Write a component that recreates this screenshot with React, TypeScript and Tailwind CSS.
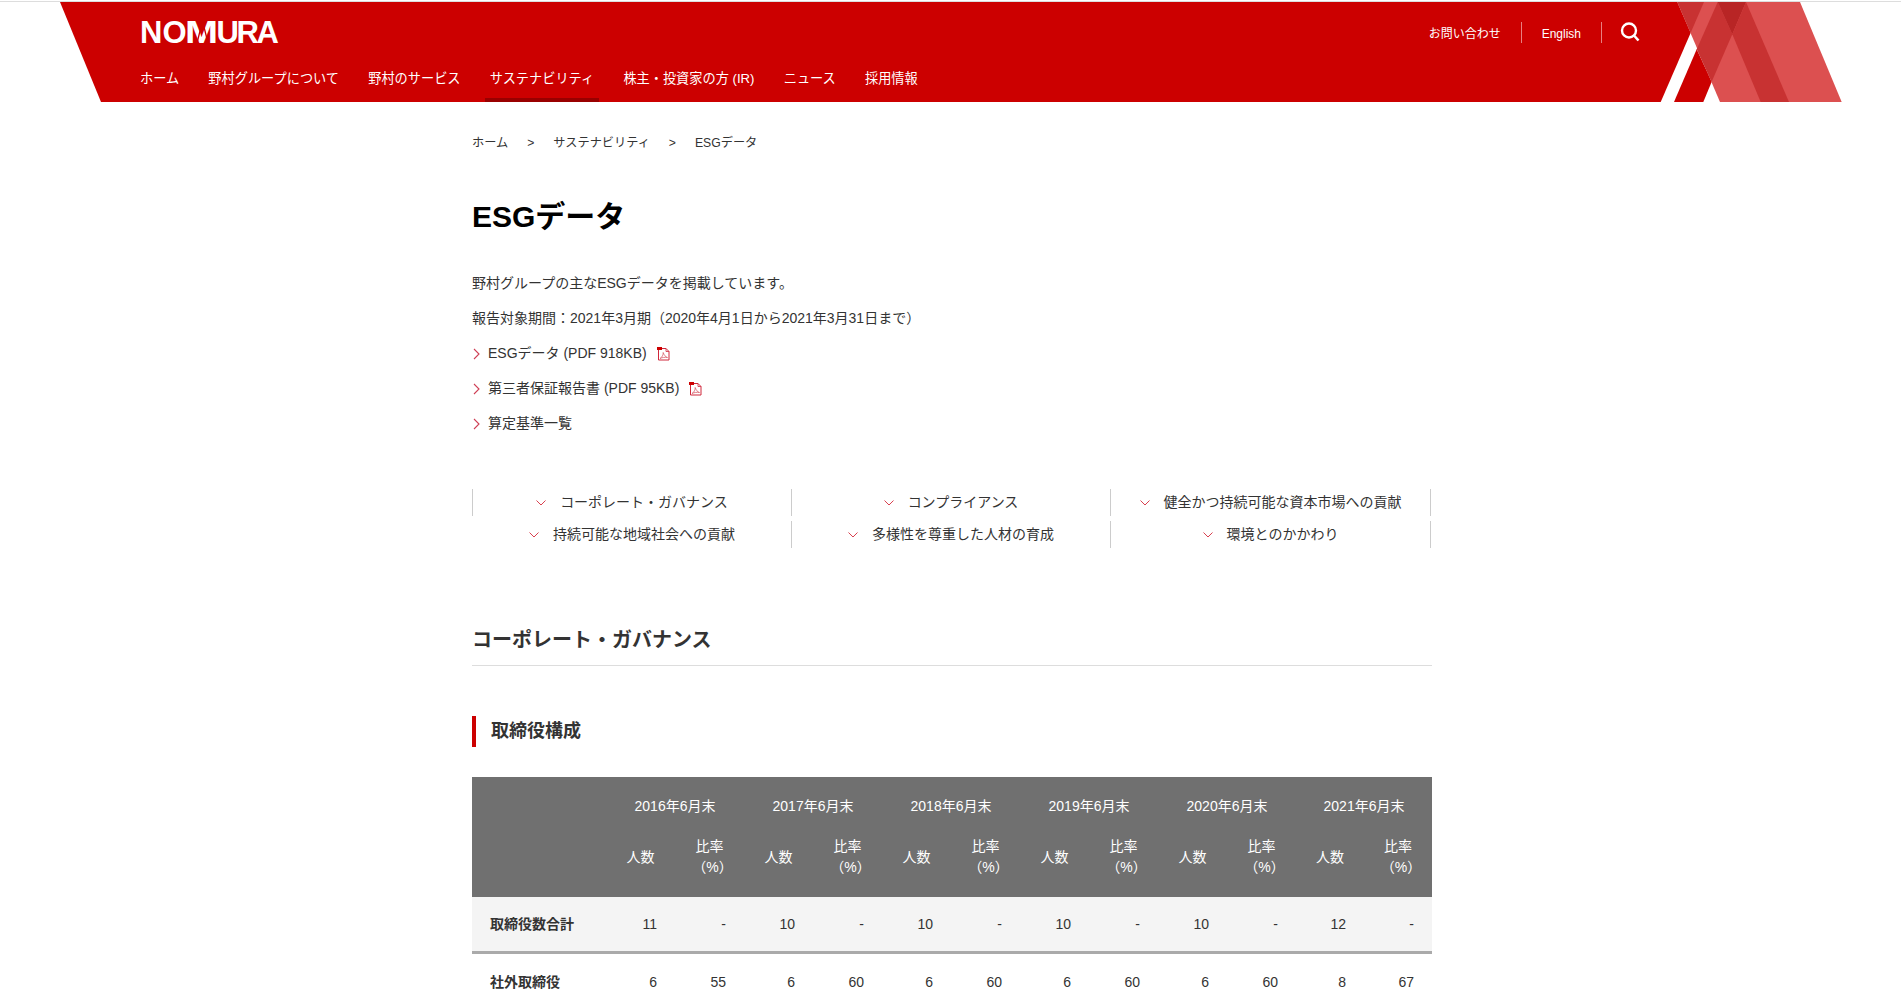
const navItems = ['ホーム', '野村グループについて', '野村のサービス', 'サステナビリティ', '株主・投資家の方 (IR)', 'ニュース', '採用情報'];

const anchors = [
  ['コーポレート・ガバナンス', 'コンプライアンス', '健全かつ持続可能な資本市場への貢献'],
  ['持続可能な地域社会への貢献', '多様性を尊重した人材の育成', '環境とのかかわり'],
];

const years = ['2016年6月末', '2017年6月末', '2018年6月末', '2019年6月末', '2020年6月末', '2021年6月末'];

const rows = [
  { label: '取締役数合計', values: ['11', '-', '10', '-', '10', '-', '10', '-', '10', '-', '12', '-'], total: true },
  { label: '社外取締役', values: ['6', '55', '6', '60', '6', '60', '6', '60', '6', '60', '8', '67'], total: false },
];

function HeaderShape() {
  return (
    <svg className="absolute inset-0 w-full h-full" viewBox="0 0 1901 100" preserveAspectRatio="none">
      <polygon fill="#cc0000" points="60,0 1677.3,0 1690.7,30.7 1660.7,100 101,100" />
      <polygon fill="#cc0000" points="1674,100 1696.7,47.3 1711.7,79.7 1703.3,100" />
      <polygon fill="#dc5050" points="1677.3,0 1800,0 1841.7,100 1720,100" />
      <polygon fill="#c83232" points="1677.3,0 1704,0 1690.7,30.7" />
      <polygon fill="#c83232" points="1696.7,47.3 1717.7,0 1732.3,32.3 1711.7,79.7" />
      <polygon fill="#b82525" points="1717.7,0 1746,0 1732.3,32.3" />
      <polygon fill="#c83232" points="1732.3,32.3 1746,0 1789,100 1760.7,100" />
    </svg>
  );
}

function Logo() {
  return (
    <div className="flex text-[31px] font-bold leading-none">
      <span>NO</span>
      {/* the M of the mark is wider than the font's, with slits cut in it */}
      <span className="relative inline-block w-[32px] -ml-[2px]">
        <span className="inline-block origin-left scale-x-[1.28]">M</span>
        <svg className="absolute left-0 top-0" width="34" height="31" viewBox="0 0 34 31" fill="none" stroke="#cc0000">
          <path d="M12 26 L17 6" strokeWidth="1.3" />
          <path d="M18 6 L23 26" strokeWidth="1.3" />
        </svg>
      </span>
      <span className="tracking-[-2.4px]">URA</span>
    </div>
  );
}

function SearchIcon() {
  return (
    <svg width="20" height="20" viewBox="0 0 20 20" fill="none" stroke="white">
      <circle cx="9" cy="8.5" r="7" strokeWidth="2.4" />
      <path d="M14 13.5 L18.5 18.5" strokeWidth="2.6" />
    </svg>
  );
}

function PdfIcon() {
  return (
    <svg width="13" height="14" viewBox="0 0 13 14" fill="none" className="shrink-0">
      <path d="M1.5 1.5 H9 L12 4.5 V13 H1.5 Z" fill="white" stroke="#d0283c" />
      <path d="M9 1.5 V4.5 H12" stroke="#d0283c" strokeWidth="0.8" />
      <rect x="0" y="0" width="5" height="3" fill="#cc0000" />
      <path d="M3 11.5 C5 10.5 6.5 7.5 6.2 5.5 C7 8 8.5 10 10.5 10.5 C8 10 5 10.5 3 11.5 Z" stroke="#d8606c" strokeWidth="0.8" />
    </svg>
  );
}

function LinkRow({ text, pdf }: { text: string; pdf?: boolean }) {
  return (
    <li className="flex items-center h-[21px]">
      <svg width="7" height="12" viewBox="0 0 7 12" fill="none" className="ml-[1px] mr-[8px]">
        <path d="M1 1 L6 6 L1 11" stroke="#cf3f55" strokeWidth="1.1" />
      </svg>
      <span>{text}</span>
      {pdf && <span className="ml-[10px] flex"><PdfIcon /></span>}
    </li>
  );
}

export default function App() {
  return (
    <div className="h-screen overflow-hidden bg-white text-[14px] text-[#333] font-['Liberation_Sans','Noto_Sans_CJK_JP',sans-serif]">
      <div className="mt-px h-px bg-[#ddd]" />

      {/* Red banner */}
      <header className="relative h-[100px] text-white">
        <HeaderShape />
        <div className="relative">
          <div className="flex items-center justify-between h-[60px] pl-[140px] pr-[261px]">
            <Logo />
            <div className="flex items-center text-[12px]">
              <a className="pt-[3px]">お問い合わせ</a>
              <span className="mx-[20px] w-px h-[21px] bg-[#e88080]" />
              <a className="pt-[3px]">English</a>
              <span className="ml-[20px] mr-[18px] w-px h-[21px] bg-[#e88080]" />
              <SearchIcon />
            </div>
          </div>
          <nav className="flex gap-[19.2px] pl-[135px] text-[13.2px]">
            {navItems.map((item, i) => (
              <a key={item} className={`h-[40px] px-[5px] pt-[7px] leading-[20px] border-b-4 ${i === 3 ? 'border-[#990000]' : 'border-transparent'}`}>
                {item}
              </a>
            ))}
          </nav>
        </div>
      </header>

      <main className="ml-[472px] w-[960px]">
        <div className="mt-[32px] flex items-center gap-[19px] h-[18px] text-[12.2px]">
          <a>ホーム</a>
          <span>&gt;</span>
          <a>サステナビリティ</a>
          <span>&gt;</span>
          <span>ESGデータ</span>
        </div>

        <h1 className="mt-[45px] text-[30px] leading-[40px] font-bold text-black">ESGデータ</h1>

        <div className="mt-[36px] flex flex-col gap-[14px] leading-[21px]">
          <p>野村グループの主なESGデータを掲載しています。</p>
          <p>報告対象期間：2021年3月期（2020年4月1日から2021年3月31日まで）</p>
          <ul className="flex flex-col gap-[14px]">
            <LinkRow text="ESGデータ (PDF 918KB)" pdf />
            <LinkRow text="第三者保証報告書 (PDF 95KB)" pdf />
            <LinkRow text="算定基準一覧" />
          </ul>
        </div>

        {/* In-page anchors */}
        <div className="mt-[55px] flex flex-col gap-[5px]">
          {anchors.map((row, r) => (
            <div key={r} className={`grid grid-cols-[319px_319px_320px] h-[27px] ${r === 0 ? 'border-l border-[#ccc]' : 'pl-px'}`}>
              {row.map(text => (
                <a key={text} className="flex items-center justify-center gap-[14px] border-r border-[#ccc]">
                  <svg width="10" height="6" viewBox="0 0 10 6" fill="none">
                    <path d="M0.5 0.5 L5 5 L9.5 0.5" stroke="#d9404f" strokeWidth="1" />
                  </svg>
                  <span>{text}</span>
                </a>
              ))}
            </div>
          ))}
        </div>

        <h2 className="mt-[77px] pb-[10px] text-[20px] leading-[30px] font-bold border-b border-[#ddd]">コーポレート・ガバナンス</h2>

        <h3 className="mt-[50px] h-[31px] pl-[15px] border-l-4 border-[#cc0000] text-[18px] leading-[31px] font-bold">取締役構成</h3>

        <table className="mt-[30px] w-[960px] table-fixed border-collapse">
          <colgroup>
            <col className="w-[134px]" />
            {Array.from({ length: 10 }).map((_, i) => <col key={i} className="w-[69px]" />)}
            <col className="w-[68px]" />
            <col className="w-[68px]" />
          </colgroup>
          <thead className="bg-[#707070] text-white font-normal">
            <tr>
              <th className="h-[40px]" />
              {years.map(y => (
                <th key={y} colSpan={2} className="pt-[19px] pb-0 leading-[21px] font-normal">{y}</th>
              ))}
            </tr>
            <tr>
              <th className="h-[80px]" />
              {years.map(y => [
                <th key={y + 'n'} className="font-normal">人数</th>,
                <th key={y + 'r'} className="font-normal leading-[21px]">比率<br /><span className="pl-[6px]">（%）</span></th>,
              ])}
            </tr>
          </thead>
          <tbody>
            {rows.map(row => (
              <tr key={row.label} className={row.total ? 'bg-[#f4f4f4] border-b-[3px] border-[#aaa]' : ''}>
                <th className={`${row.total ? 'h-[55px]' : 'h-[58px]'} pl-[18px] pt-px text-left font-bold`}>{row.label}</th>
                {row.values.map((v, i) => (
                  <td key={i} className="pr-[18px] pt-px text-right">{v}</td>
                ))}
              </tr>
            ))}
          </tbody>
        </table>
      </main>
    </div>
  );
}
